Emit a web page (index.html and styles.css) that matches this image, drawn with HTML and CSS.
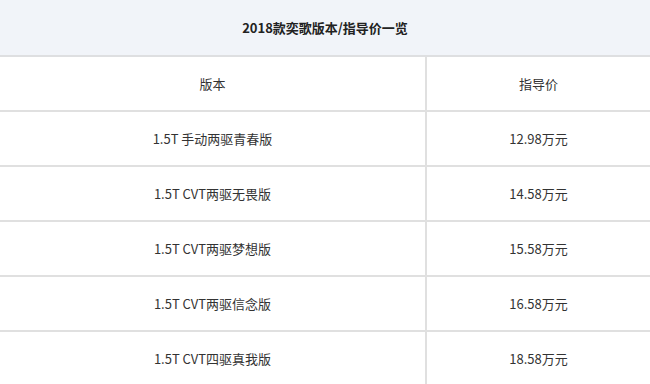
FILE: index.html
```html
<!DOCTYPE html>
<html lang="zh-CN">
<head>
<meta charset="utf-8">
<link rel="stylesheet" href="styles.css">
</head>
<body>
<div class="table">
  <div class="title">2018款奕歌版本/指导价一览</div>
  <div class="row"><div class="cell">版本</div><div class="cell price">指导价</div></div>
  <div class="row"><div class="cell">1.5T 手动两驱青春版</div><div class="cell price">12.98万元</div></div>
  <div class="row"><div class="cell">1.5T CVT两驱无畏版</div><div class="cell price">14.58万元</div></div>
  <div class="row"><div class="cell">1.5T CVT两驱梦想版</div><div class="cell price">15.58万元</div></div>
  <div class="row"><div class="cell">1.5T CVT两驱信念版</div><div class="cell price">16.58万元</div></div>
  <div class="row"><div class="cell">1.5T CVT四驱真我版</div><div class="cell price">18.58万元</div></div>
</div>
</body>
</html>
```
FILE: styles.css
```css
html, body {
  margin: 0;
  padding: 0;
  background: #ffffff;
}
body {
  font-family: "Noto Sans CJK SC", "Noto Sans", sans-serif;
  font-size: 13px;
  color: #333333;
}
.table {
  width: 650px;
}
.title {
  height: 56px;
  background: #f1f4f9;
  border-bottom: 2px solid #dedfe1;
  display: flex;
  align-items: center;
  justify-content: center;
  font-weight: bold;
  color: #222222;
  box-sizing: border-box;
  height: 57px;
}
.row {
  display: grid;
  grid-template-columns: 425px 1fr;
  height: 55px;
  box-sizing: border-box;
  border-bottom: 2px solid #e0e0e0;
}
.cell {
  display: flex;
  align-items: center;
  justify-content: center;
}
.price {
  border-left: 2px solid #e0e0e0;
}
```
